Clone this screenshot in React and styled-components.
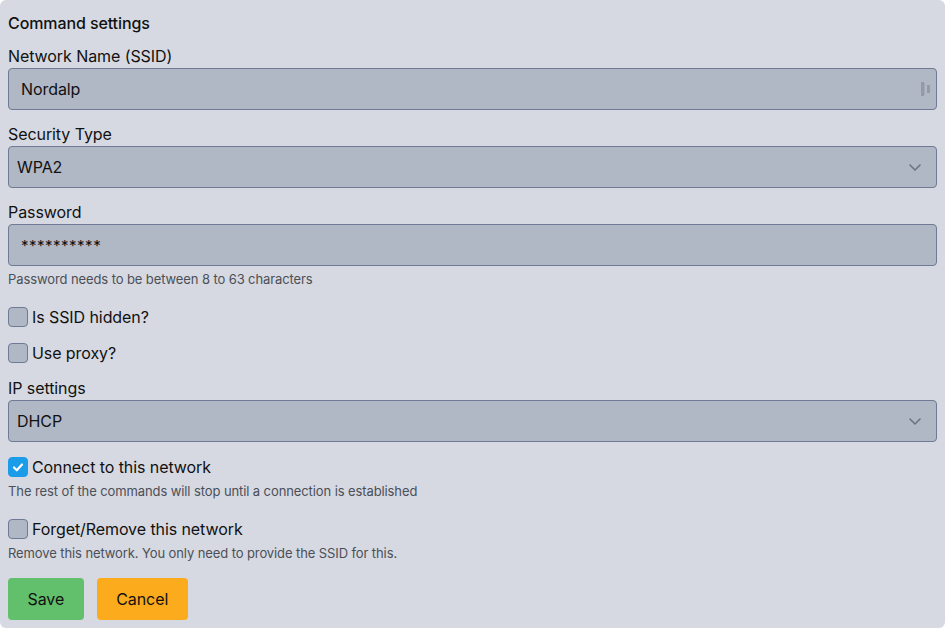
import React from "react";
import styled, { createGlobalStyle } from "styled-components";

const Global = createGlobalStyle`
  html, body { margin: 0; padding: 0; background: #ffffff; }
  body { font-family: Inter, "Noto Sans", sans-serif; color: #111; }
  * { box-sizing: border-box; }
`;

const Card = styled.div`
  background: #d6d9e1;
  border-radius: 6px;
  padding: 11px 8px 8px 8px;
  width: 945px;
  display: flex;
  flex-direction: column;
`;

const Title = styled.div`
  font-size: 16px;
  font-weight: 500;
  line-height: 24px;
  letter-spacing: -0.1px;
  margin-bottom: 9px;
`;

const Label = styled.div`
  font-size: 16px;
  line-height: 24px;
  letter-spacing: -0.08px;
  margin-top: ${(p) => p.$mt || 0}px;
`;

const InputBox = styled.div`
  position: relative;
  height: 42px;
  background: #b0b7c5;
  border: 1px solid #6f7a94;
  border-radius: 4px;
  display: flex;
  align-items: center;
  padding: 0 ${(p) => (p.$select ? 8 : 12)}px;
  font-size: 16px;
  letter-spacing: -0.08px;
  color: #111;
`;

const Stars = styled.span`
  letter-spacing: 0.5px;
  font-size: 15px;
`;

const RightIcon = styled.span`
  position: absolute;
  right: ${(p) => p.$r || 14}px;
  top: 50%;
  transform: translateY(-50%);
  display: flex;
`;

const Help = styled.div`
  font-size: 13px;
  line-height: 18px;
  letter-spacing: -0.1px;
  color: #4b4f57;
  margin-top: ${(p) => p.$mt || 4}px;
`;

const CheckRow = styled.label`
  display: flex;
  align-items: center;
  gap: 4px;
  font-size: 16px;
  line-height: 24px;
  letter-spacing: -0.08px;
  margin-top: ${(p) => p.$mt || 0}px;
`;

const Box = styled.span`
  width: 20px;
  height: 20px;
  border-radius: 4px;
  border: 1px solid ${(p) => (p.$checked ? "#1a9ce8" : "#6f7a94")};
  background: ${(p) => (p.$checked ? "#1a9ce8" : "#b0b7c5")};
  display: flex;
  align-items: center;
  justify-content: center;
`;

const Buttons = styled.div`
  display: flex;
  gap: 13px;
  margin-top: 16px;
`;

const Button = styled.button`
  height: 42px;
  padding: 0 19.5px;
  border: none;
  border-radius: 4px;
  font-family: Inter, "Noto Sans", sans-serif;
  font-size: 16px;
  letter-spacing: -0.08px;
  color: #111;
  background: ${(p) => p.$bg};
`;

const Chevron = () => (
  <svg width="14" height="14" viewBox="0 0 14 14" fill="none">
    <path d="M2 5l5 5 5-5" stroke="#6b7385" strokeWidth="1.6" strokeLinecap="round" strokeLinejoin="round" />
  </svg>
);

const KeyIcon = () => (
  <svg width="10" height="14" viewBox="0 0 10 14">
    <rect x="0" y="0" width="3" height="14" fill="#959aa7" />
    <rect x="3" y="1" width="1" height="12" fill="#a4a9b5" />
    <rect x="6" y="3" width="3" height="8" fill="#959aa7" />
  </svg>
);

const Check = () => (
  <svg width="14" height="14" viewBox="0 0 14 14" fill="none">
    <path d="M3 7.5l2.8 2.8L11 4.5" stroke="#fff" strokeWidth="2.2" strokeLinecap="round" strokeLinejoin="round" />
  </svg>
);

export default function App() {
  return (
    <>
      <Global />
      <Card>
        <Title>Command settings</Title>
        <Label>Network Name (SSID)</Label>
        <InputBox>
          Nordalp
          <RightIcon $r={5}><KeyIcon /></RightIcon>
        </InputBox>
        <Label $mt={12}>Security Type</Label>
        <InputBox $select>
          WPA2
          <RightIcon><Chevron /></RightIcon>
        </InputBox>
        <Label $mt={12}>Password</Label>
        <InputBox>
          <Stars>**********</Stars>
        </InputBox>
        <Help>Password needs to be between 8 to 63 characters</Help>
        <CheckRow $mt={17}>
          <Box />
          Is SSID hidden?
        </CheckRow>
        <CheckRow $mt={12}>
          <Box />
          Use proxy?
        </CheckRow>
        <Label $mt={11}>IP settings</Label>
        <InputBox $select>
          DHCP
          <RightIcon><Chevron /></RightIcon>
        </InputBox>
        <CheckRow $mt={13}>
          <Box $checked><Check /></Box>
          Connect to this network
        </CheckRow>
        <Help $mt={3}>The rest of the commands will stop until a connection is established</Help>
        <CheckRow $mt={17}>
          <Box />
          Forget/Remove this network
        </CheckRow>
        <Help $mt={3}>Remove this network. You only need to provide the SSID for this.</Help>
        <Buttons>
          <Button $bg="#62bf6b">Save</Button>
          <Button $bg="#fbab1b">Cancel</Button>
        </Buttons>
      </Card>
    </>
  );
}
